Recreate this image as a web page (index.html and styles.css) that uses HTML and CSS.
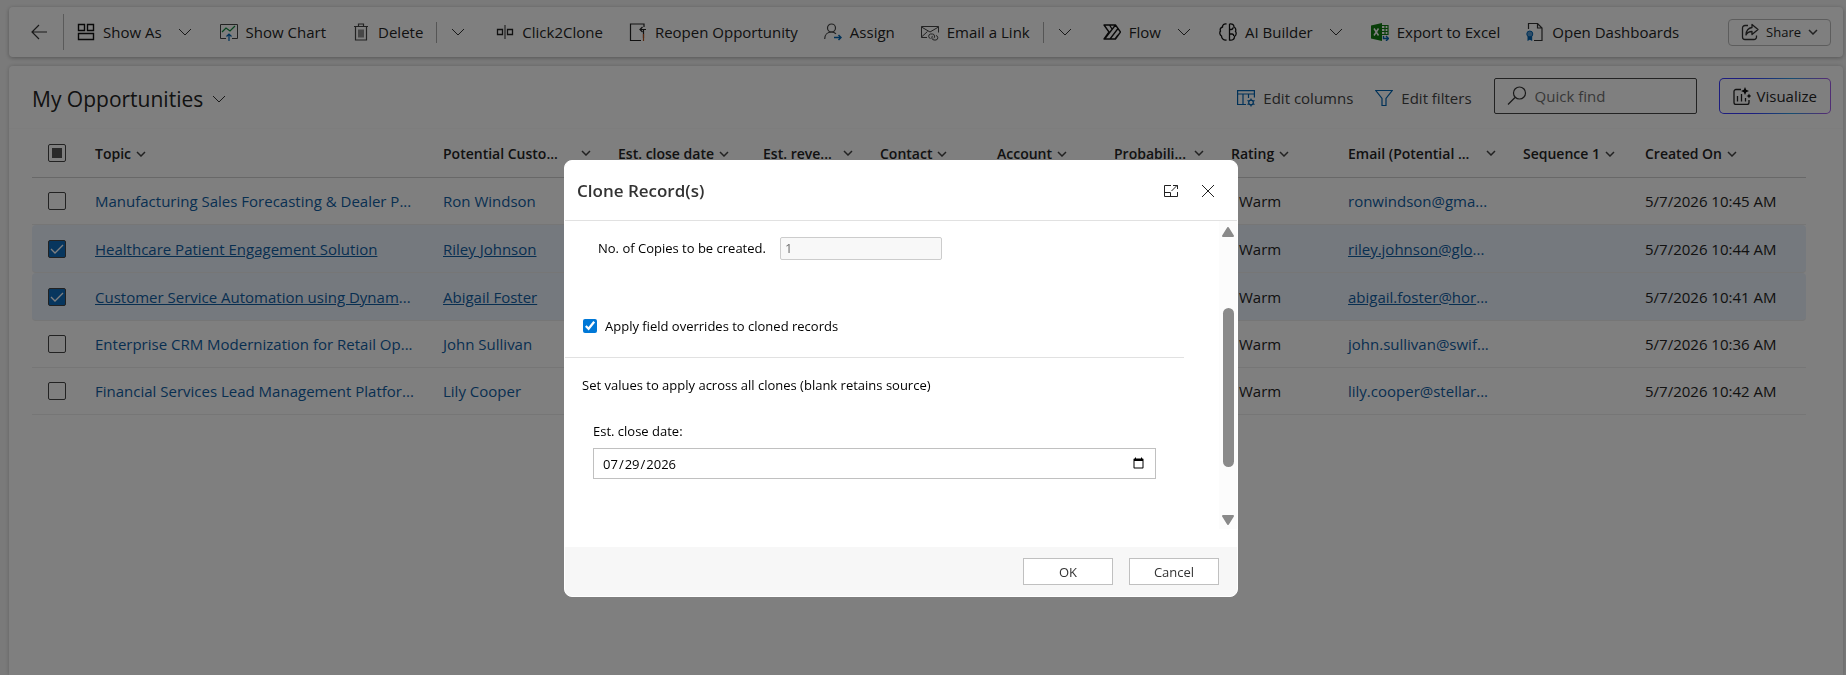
FILE: index.html
```
<!DOCTYPE html>
<html lang="en">
<head>
  <meta charset="UTF-8" />
  <meta name="viewport" content="width=device-width, initial-scale=1.0"/>
  <title>My Opportunities</title>
  <link rel="stylesheet" href="styles.css">
</head>
<body>

  <!-- Shared chevron shapes -->
  <svg class="sprite" aria-hidden="true">
    <symbol id="chevron" viewBox="0 0 14 8"><path d="M1 1l6 6 6-6" fill="none" stroke="currentColor" stroke-width="1"/></symbol>
    <symbol id="chevron-bold" viewBox="0 0 10 6"><path d="M1 1l4 4 4-4" fill="none" stroke="currentColor" stroke-width="1.5"/></symbol>
  </svg>

  <div class="page">
    <nav class="command-bar" aria-label="Commands">
      <button class="back" aria-label="Back">
        <svg width="18" height="16" viewBox="0 0 18 16" fill="none" stroke="#333" stroke-width="1.2"><path d="M17 8H2M9 1L2 8l7 7"/></svg>
      </button>

      <button class="command">
        <svg class="icon" viewBox="0 0 18 18" fill="none" stroke="#111" stroke-width="1.4"><path d="M1.5 1.5h6v6h-6zM10.5 1.5h6v6h-6zM1.5 10.5h15v6h-15z"/></svg>
        <span>Show As</span>
        <svg class="chevron menu"><use href="#chevron"/></svg>
      </button>
      <button class="command">
        <svg class="icon" viewBox="0 0 18 18" fill="none"><path d="M6 15.5H.5v-14h17v14H12" stroke="#444"/><path d="M2 9l4-4 4 3 5-5" stroke="#10893e" stroke-width="1.2"/><path d="M9 18v-7M6.500 13.500L9 11l2.500 2.500" stroke="#0063b1" stroke-width="1.2"/></svg>
        <span>Show Chart</span>
      </button>
      <button class="command">
        <svg class="icon" viewBox="0 0 18 18" fill="none" stroke="#444" stroke-width="1.2"><path d="M2 3.500h14M6.500 3V1h5v2M3.500 4v13h11V4M7 6.500v8M9 6.500v8M11 6.500v8"/></svg>
        <span>Delete</span>
      </button>
      <button class="split" aria-label="More delete options"><svg class="chevron"><use href="#chevron"/></svg></button>
      <button class="command">
        <svg class="icon" viewBox="0 0 18 18" fill="none" stroke="#222" stroke-width="1.3"><path d="M1.500 6.500h5v5h-5zM11.500 6.500h5v5h-5z"/><path d="M9 2v14" stroke="#555"/></svg>
        <span>Click2Clone</span>
      </button>
      <button class="command">
        <svg class="icon" viewBox="0 0 18 18" fill="none" stroke="#222" stroke-width="1.2"><path d="M15 4V1H1.500v16.500H12"/><path d="M17 6.500h-6M13.500 4L11 6.500 13.500 9M14.500 7v8" /><path d="M14.500 11v7" stroke="#b3521e"/></svg>
        <span>Reopen Opportunity</span>
      </button>
      <button class="command">
        <svg class="icon" viewBox="0 0 18 18" fill="none" stroke="#444" stroke-width="1.200"><circle cx="7.500" cy="5" r="4"/><path d="M.7 16c0-4.500 3-7 6.800-7 2 0 3.500.7 4.500 1.800"/><path d="M10 14.500h7M14.500 12l2.500 2.500-2.500 2.500" stroke="#0063b1" stroke-width="1.500"/></svg>
        <span>Assign</span>
      </button>
      <button class="command">
        <svg class="icon" viewBox="0 0 18 18" fill="none" stroke="#444"><path d="M6 14.500H.5v-11h17v6M.5 4l8.500 5 8.500-5M.5 14l6-5.500"/><path d="M9.500 15.500a2.300 2.300 0 0 1 0-4.500h2a2.300 2.300 0 0 1 1 4.300M15 12.500a2.300 2.300 0 0 1 0 4.500h-2a2.300 2.300 0 0 1-1-4.300"/></svg>
        <span>Email a Link</span>
      </button>
      <button class="split" aria-label="More email options"><svg class="chevron"><use href="#chevron"/></svg></button>
      <button class="command">
        <svg class="icon" viewBox="0 0 18 18" fill="none" stroke="#111" stroke-width="1.300" stroke-linejoin="round"><path d="M1 2h11.500l5 7-5 7H1l5-7zM2 15.500L12.500 2M7 16l8-10.500M12 16l3-4M6.500 2L9 6"/></svg>
        <span>Flow</span>
        <svg class="chevron menu"><use href="#chevron"/></svg>
      </button>
      <button class="command">
        <svg class="icon" viewBox="0 0 18 18" fill="none" stroke="#111" stroke-width="1.300"><path d="M7.500 1C5 .5 3.500 2 3.500 4 1.500 4.500.7 6.500 1.500 8 .3 9.500.7 12 2.500 13c0 3 2.500 4.500 5 4M10.500 1v16c3 .7 5-.8 5-3.500 2-1 2-4 1-5 .8-2-.2-4-1.500-4.500C15 1.500 13 .5 10.500 1M10.500 6.500H12c1.500 0 2-1 2-2M10.500 11H13c1 0 1.700.8 1.700 2"/></svg>
        <span>AI Builder</span>
        <svg class="chevron menu"><use href="#chevron"/></svg>
      </button>
      <button class="command">
        <svg class="icon" viewBox="0 0 18 18" fill="none"><path d="M11 2.500h6v9h-6M11 5.500h6M11 8.500h6M14 2.500v9" stroke="#107c10" stroke-width="1.200"/><path d="M0 2.500L11 0v18L0 15.500z" fill="#107c10"/><path d="M3 5.500l4.500 7M7.500 5.500L3 12.500" stroke="#fff" stroke-width="1.500"/><path d="M12.500 13v2.500H17M15 13l2.500 2.500L15 18" stroke="#0063b1" stroke-width="1.400"/></svg>
        <span>Export to Excel</span>
      </button>
      <button class="command">
        <svg class="icon" viewBox="0 0 18 18" fill="none"><path d="M2.500 6V.5h9l4.500 4.500v12.500H8M11.500.5V5H16" stroke="#333" stroke-width="1.200"/><circle cx="3.800" cy="11" r="3" fill="#5a9bd0" stroke="#0063b1"/><path d="M1.500 13.500h4.700V18l-2.400-1.200L1.500 18z" fill="#0063b1"/></svg>
        <span>Open Dashboards</span>
      </button>

      <button class="share">
        <svg class="icon" viewBox="0 0 18 18" fill="none" stroke="#333" stroke-width="1.300" stroke-linejoin="round"><path d="M7 2.500H4A2.500 2.500 0 0 0 1.500 5v9A2.500 2.500 0 0 0 4 16.500h9a2.500 2.500 0 0 0 2.500-2.500v-1.500"/><path d="M11 1.500l6 5-6 5V8.500C8 8.500 6.300 9.500 5 12c.2-4 2-7 6-7.500z"/></svg>
        <span>Share</span>
        <svg class="sort"><use href="#chevron-bold"/></svg>
      </button>
    </nav>

    <main class="card">
      <header class="view-header">
        <h1><button class="view-name">My Opportunities <svg class="chevron"><use href="#chevron"/></svg></button></h1>
        <div class="view-tools">
          <button class="tool">
            <svg class="icon" viewBox="0 0 18 18" fill="none" stroke="#0063b1" stroke-width="1.200"><path d="M9 15.500H.6V1.600h16.800v7M.6 5h16.800M6 5v10.500M11.500 5v4"/><circle cx="14" cy="13.500" r="2.300"/><path d="M14 9.500v1.700M14 15.800v1.700M10.500 11.500l1.500.8M16 14.700l1.500.8M17.500 11.500l-1.500.8M12 14.700l-1.500.8"/></svg>
            Edit columns
          </button>
          <button class="tool">
            <svg class="icon" viewBox="0 0 18 18" fill="none" stroke="#0063b1" stroke-width="1.200"><path d="M.8 1.500h16.400L11 9.500v7H7v-7z"/></svg>
            Edit filters
          </button>
          <label class="search">
            <svg width="20" height="20" viewBox="0 0 20 20" fill="none" stroke="#333" stroke-width="1.200"><circle cx="12.500" cy="7" r="6"/><path d="M8 11.500L1 18.500"/></svg>
            <input type="text" placeholder="Quick find" aria-label="Quick find">
          </label>
          <button class="visualize">
            <svg class="icon" viewBox="0 0 18 18" fill="none" stroke="#222" stroke-width="1.300"><path d="M8 2.500H3A2 2 0 0 0 1 4.500v11a2 2 0 0 0 2 2h11a2 2 0 0 0 2-2V13M4.500 9v5.500M8.500 7v7.500M12.500 11v3.500"/><path d="M12 0l1.200 2.800L16 4l-2.800 1.200L12 8l-1.200-2.800L8 4l2.800-1.200zM16 6.500l.8 1.700 1.700.8-1.700.8-.8 1.700-.8-1.700-1.700-.8 1.700-.8z" fill="#111" stroke="none"/></svg>
            Visualize
          </button>
        </div>
      </header>

      <div class="grid">
        <table>
          <colgroup>
            <col class="col-check"><col class="col-topic"><col class="col-wide"><col class="col-date">
            <col class="col-std"><col class="col-std"><col class="col-std"><col class="col-std"><col class="col-std">
            <col class="col-wide"><col class="col-seq"><col>
          </colgroup>
          <thead>
            <tr>
              <th><input type="checkbox" class="check partial" aria-label="Select all rows"></th>
              <th>Topic<svg class="sort"><use href="#chevron-bold"/></svg></th>
              <th><div class="clipped">Potential Custo...<svg class="sort"><use href="#chevron-bold"/></svg></div></th>
              <th>Est. close date<svg class="sort"><use href="#chevron-bold"/></svg></th>
              <th><div class="clipped">Est. reve...<svg class="sort"><use href="#chevron-bold"/></svg></div></th>
              <th>Contact<svg class="sort"><use href="#chevron-bold"/></svg></th>
              <th>Account<svg class="sort"><use href="#chevron-bold"/></svg></th>
              <th><div class="clipped">Probabili...<svg class="sort"><use href="#chevron-bold"/></svg></div></th>
              <th>Rating<svg class="sort"><use href="#chevron-bold"/></svg></th>
              <th><div class="clipped">Email (Potential ...<svg class="sort"><use href="#chevron-bold"/></svg></div></th>
              <th>Sequence 1<svg class="sort"><use href="#chevron-bold"/></svg></th>
              <th>Created On<svg class="sort"><use href="#chevron-bold"/></svg></th>
            </tr>
          </thead>
          <tbody>
            <tr>
              <td><input type="checkbox" class="check" aria-label="Select row 1"></td>
              <td class="link"><a href="#">Manufacturing Sales Forecasting &amp; Dealer P</a>...</td>
              <td class="link"><a href="#">Ron Windson</a></td>
              <td></td><td></td><td></td><td></td><td></td>
              <td class="rating">Warm</td>
              <td class="link"><a href="#">ronwindson@gma</a>...</td>
              <td></td>
              <td>5/7/2026 10:45 AM</td>
            </tr>
            <tr class="selected">
              <td><input type="checkbox" class="check" aria-label="Select row 2" checked></td>
              <td class="link"><a href="#">Healthcare Patient Engagement Solution</a></td>
              <td class="link"><a href="#">Riley Johnson</a></td>
              <td></td><td></td><td></td><td></td><td></td>
              <td class="rating">Warm</td>
              <td class="link"><a href="#">riley.johnson@glo</a>...</td>
              <td></td>
              <td>5/7/2026 10:44 AM</td>
            </tr>
            <tr class="selected">
              <td><input type="checkbox" class="check" aria-label="Select row 3" checked></td>
              <td class="link"><a href="#">Customer Service Automation using Dynam</a>...</td>
              <td class="link"><a href="#">Abigail Foster</a></td>
              <td></td><td></td><td></td><td></td><td></td>
              <td class="rating">Warm</td>
              <td class="link"><a href="#">abigail.foster@hor</a>...</td>
              <td></td>
              <td>5/7/2026 10:41 AM</td>
            </tr>
            <tr>
              <td><input type="checkbox" class="check" aria-label="Select row 4"></td>
              <td class="link"><a href="#">Enterprise CRM Modernization for Retail Op</a>...</td>
              <td class="link"><a href="#">John Sullivan</a></td>
              <td></td><td></td><td></td><td></td><td></td>
              <td class="rating">Warm</td>
              <td class="link"><a href="#">john.sullivan@swif</a>...</td>
              <td></td>
              <td>5/7/2026 10:36 AM</td>
            </tr>
            <tr>
              <td><input type="checkbox" class="check" aria-label="Select row 5"></td>
              <td class="link"><a href="#">Financial Services Lead Management Platfor</a>...</td>
              <td class="link"><a href="#">Lily Cooper</a></td>
              <td></td><td></td><td></td><td></td><td></td>
              <td class="rating">Warm</td>
              <td class="link"><a href="#">lily.cooper@stellar</a>...</td>
              <td></td>
              <td>5/7/2026 10:42 AM</td>
            </tr>
          </tbody>
        </table>
      </div>
    </main>
  </div>

  <div class="overlay">
    <form class="dialog" role="dialog" aria-labelledby="dialogTitle">
      <header class="dialog-header">
        <h2 id="dialogTitle">Clone Record(s)</h2>
        <button type="button" class="dialog-icon" aria-label="Expand">
          <svg width="16" height="14" viewBox="0 0 16 14" fill="none" stroke="#222"><path d="M8 1.500H1.500v11h13V8M1.500 8.500h6v4M8.500 7L14.500 1M10 1.500h4.500V5"/></svg>
        </button>
        <button type="button" class="dialog-icon" aria-label="Close">
          <svg width="14" height="14" viewBox="0 0 14 14" fill="none" stroke="#222"><path d="M1 1l12 12M13 1L1 13"/></svg>
        </button>
      </header>

      <div class="dialog-body">
        <div class="fields">
          <div class="copies">
            <label for="copies">No. of Copies to be created.</label>
            <input type="text" id="copies" value="1" disabled>
          </div>
          <div class="override">
            <input type="checkbox" id="override" checked>
            <label for="override">Apply field overrides to cloned records</label>
          </div>
          <p class="hint">Set values to apply across all clones (blank retains source)</p>
          <div class="date-field">
            <label for="closeDate">Est. close date:</label>
            <input type="date" id="closeDate" value="2026-07-29">
          </div>
        </div>
        <div class="scrollbar" aria-hidden="true">
          <svg width="12" height="10" viewBox="0 0 12 10"><path d="M6 1L11 9H1z" fill="#8a8a8a" stroke="#8a8a8a" stroke-width="2" stroke-linejoin="round"/></svg>
          <div class="thumb"></div>
          <svg width="12" height="10" viewBox="0 0 12 10"><path d="M6 9L1 1h10z" fill="#8a8a8a" stroke="#8a8a8a" stroke-width="2" stroke-linejoin="round"/></svg>
        </div>
      </div>

      <footer class="dialog-footer">
        <button type="button">OK</button>
        <button type="button">Cancel</button>
      </footer>
    </form>
  </div>

</body>
</html>
```
FILE: styles.css
```
* {
  box-sizing: border-box;
}

body {
  margin: 0;
  font-family: "Segoe UI", "Open Sans", "Noto Sans", sans-serif;
  font-size: 15px;
  color: #242424;
  background: #f5f5f5;
}

button,
input {
  font: inherit;
  color: inherit;
}

button {
  display: flex;
  align-items: center;
  padding: 0;
  border: none;
  background: none;
  white-space: nowrap;
  cursor: pointer;
}

svg {
  flex: none;
}

.sprite {
  display: none;
}

.icon {
  width: 18px;
  height: 18px;
}

.chevron {
  width: 14px;
  height: 8px;
  color: #333;
}

.page {
  display: flex;
  flex-direction: column;
  gap: 9px;
  min-height: 100vh;
  padding: 7px 3px 0 9px;
}

/* Command bar */
.command-bar {
  display: flex;
  align-items: center;
  height: 50px;
  padding-right: 12px;
  background: #fff;
  border-radius: 4px;
  box-shadow: 0 1px 4px rgba(0, 0, 0, 0.3);
}

.back {
  height: 36px;
  padding: 0 15px 0 21px;
  border-right: 1px solid #b5b5b5;
}

.command {
  gap: 8px;
  padding: 0 13px;
}

.menu {
  margin: 0 2px 0 8px;
}

.split {
  height: 21px;
  padding: 0 18px 0 14px;
  border-left: 1px solid #aaa;
}

.share {
  gap: 7px;
  height: 27px;
  margin-left: auto;
  padding: 0 12px;
  border: 1px solid #bbb;
  border-radius: 4px;
  font-size: 13px;
}

.share .sort {
  margin: 0;
}

/* View */
.card {
  flex: 1;
  background: #fff;
  border-radius: 4px 4px 0 0;
  box-shadow: 0 0 4px rgba(0, 0, 0, 0.2);
}

.view-header {
  display: flex;
  justify-content: space-between;
  height: 63px;
  padding: 12px 12px 0 23px;
  border-bottom: 1px solid #fafafa;
}

h1 {
  margin: 0;
  font-size: 21px;
  font-weight: 400;
}

.view-name {
  gap: 9px;
  height: 42px;
}

.view-tools {
  display: flex;
  gap: 22px;
  height: 36px;
}

.tool {
  gap: 8px;
  padding-top: 4px;
  color: #444;
}

.search {
  display: flex;
  align-items: center;
  gap: 8px;
  width: 203px;
  padding: 0 12px;
  border: 1px solid #444;
  border-radius: 2px;
}

.search input {
  width: 100%;
  padding: 0;
  border: none;
  outline: none;
  background: none;
}

.search input::placeholder {
  color: #707070;
}

.visualize {
  gap: 6px;
  padding: 0 13px;
  border: 1px solid transparent;
  border-radius: 5px;
  background:
    linear-gradient(#fff, #fff) padding-box,
    linear-gradient(90deg, #3b3bff 30%, #2f9be0 65%, #a05ce8 95%) border-box;
}

/* Grid */
.grid {
  padding: 0 37px 0 23px;
}

table {
  width: 100%;
  table-layout: fixed;
  border-collapse: separate;
  border-spacing: 0;
}

.col-check { width: 55px; }
.col-topic { width: 348px; }
.col-wide { width: 175px; }
.col-date { width: 145px; }
.col-std { width: 117px; }
.col-seq { width: 122px; }

th,
td {
  height: 47px;
  padding: 0 0 0 8px;
  border-bottom: 1px solid #ececec;
  text-align: left;
  white-space: nowrap;
}

th {
  height: 49px;
  border-bottom-color: #d0d0d0;
  font-size: 14px;
  font-weight: 600;
}

th:first-child,
td:first-child {
  padding-left: 16px;
}

.rating {
  padding-left: 16px;
}

.sort {
  width: 10px;
  height: 6px;
  margin-left: 5px;
  vertical-align: 2px;
  color: #444;
}

.clipped {
  display: flex;
  align-items: center;
  justify-content: space-between;
  padding-right: 19px;
}

.link,
.link a {
  color: #115ea3;
  text-decoration: none;
}

.selected td {
  height: 48px;
  background: #ebf3fc;
}

.selected td:first-child {
  border-radius: 4px 0 0 4px;
}

.selected td:last-child {
  border-radius: 0 4px 4px 0;
}

.selected .link a {
  text-decoration: underline;
}

.check {
  appearance: none;
  display: block;
  width: 18px;
  height: 18px;
  margin: 0;
  border: 1px solid #444;
  border-radius: 2px;
}

.check:checked {
  background: #0f6cbd url("data:image/svg+xml,%3Csvg xmlns='http://www.w3.org/2000/svg' viewBox='0 0 16 16'%3E%3Cpath d='M2 8l4 4 8-8' fill='none' stroke='white' stroke-width='1.3'/%3E%3C/svg%3E") center / 16px no-repeat;
}

.partial {
  padding: 3px;
  background: #555 content-box;
}

/* Clone dialog */
.overlay {
  position: fixed;
  inset: 0;
  display: flex;
  align-items: flex-start;
  justify-content: center;
  padding: 160px 44px 0 0;
  background: rgba(0, 0, 0, 0.5);
}

.dialog {
  width: 674px;
  background: #fff;
  border: 1px solid #fff;
  border-radius: 8px;
  color: #000;
  font-size: 13px;
  overflow: hidden;
}

.dialog-header {
  display: flex;
  align-items: center;
  gap: 22px;
  height: 60px;
  padding: 0 22px 0 12px;
  border-bottom: 1px solid #e1e1e1;
}

.dialog-header h2 {
  margin: 0 auto 0 0;
  font-size: 17px;
  font-weight: 600;
  color: #333;
}

.dialog-body {
  display: flex;
  justify-content: space-between;
  margin-bottom: 18px;
}

.fields {
  width: 619px;
}

.copies {
  display: flex;
  align-items: center;
  gap: 14px;
  height: 54px;
  padding: 0 0 0 33px;
}

.copies input {
  width: 162px;
  height: 23px;
  padding: 0 4px;
  border: 1px solid #ccc;
  border-radius: 2px;
  background: #f8f8f8;
  color: #6d6d6d;
}

.override {
  display: flex;
  align-items: center;
  gap: 8px;
  margin-top: 20px;
  height: 63px;
  padding: 0 0 0 18px;
  border-bottom: 1px solid #e1e1e1;
}

.override input {
  width: 14px;
  height: 14px;
  margin: 0;
  accent-color: #0078d7;
}

.hint {
  margin: 0;
  padding: 18px 17px;
}

.date-field {
  display: flex;
  flex-direction: column;
  gap: 8px;
  padding: 10px 28px 0;
}

.date-field input {
  height: 31px;
  padding: 0 8px;
  border: 1px solid #c0c0c0;
}

.scrollbar {
  display: flex;
  flex-direction: column;
  align-items: center;
  width: 18px;
  height: 308px;
  padding: 6px 0 4px;
  background: #fcfcfc;
}

.thumb {
  width: 11px;
  height: 159px;
  margin: 71px 0 auto;
  border-radius: 6px;
  background: #8a8a8a;
}

.dialog-footer {
  display: flex;
  justify-content: flex-end;
  gap: 16px;
  padding: 11px 18px;
  background: #f7f7f7;
}

.dialog-footer button {
  justify-content: center;
  width: 90px;
  height: 27px;
  border: 1px solid #c0c0c0;
  background: #fff;
  color: #333;
}
```
